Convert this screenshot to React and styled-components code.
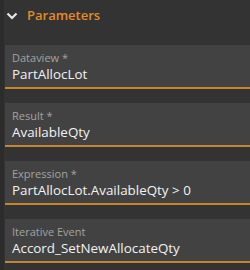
import React from 'react';
import styled, { createGlobalStyle } from 'styled-components';

const GlobalStyle = createGlobalStyle`
  html, body {
    margin: 0;
    padding: 0;
    background: #333333;
  }
  body {
    font-family: 'Open Sans', 'Noto Sans', sans-serif;
  }
`;

const Panel = styled.div`
  width: 250px;
  height: 270px;
  background: #333333;
  border-left: 4px solid #2c2c2c;
  box-sizing: border-box;
  overflow: hidden;
`;

const Header = styled.div`
  display: flex;
  align-items: center;
  gap: 9px;
  height: 30px;
  padding-left: 2px;
  color: #e38b26;
  font-size: 13px;
  font-weight: 600;
`;

const Chevron = styled.svg`
  width: 12px;
  height: 8px;
  margin-top: 1px;
`;

const Fields = styled.div`
  display: flex;
  flex-direction: column;
  gap: 14px;
  padding-top: 15px;
  padding-left: 1px;
`;

const Field = styled.div`
  display: flex;
  flex-direction: column;
  background: #424242;
  border-bottom: 2px solid #c4852e;
  padding: 6px 0 0 7px;
  box-sizing: content-box;
  height: 36px;
`;

const Label = styled.div`
  color: #a3a3a3;
  font-size: 11px;
  line-height: 14px;
`;

const Value = styled.div`
  color: #f2f2f2;
  font-size: 13.4px;
  line-height: 18px;
  white-space: nowrap;
`;

const fields = [
  { label: 'Dataview *', value: 'PartAllocLot' },
  { label: 'Result *', value: 'AvailableQty' },
  { label: 'Expression *', value: 'PartAllocLot.AvailableQty > 0' },
  { label: 'Iterative Event', value: 'Accord_SetNewAllocateQty' },
];

export default function App() {
  return (
    <>
      <GlobalStyle />
      <Panel>
        <Header>
          <Chevron viewBox="0 0 12 8">
            <path d="M1.5 1.5 L6 6 L10.5 1.5" fill="none" stroke="#e8e8e8" strokeWidth="2.2" />
          </Chevron>
          Parameters
        </Header>
        <Fields>
          {fields.map((f) => (
            <Field key={f.label}>
              <Label>{f.label}</Label>
              <Value>{f.value}</Value>
            </Field>
          ))}
        </Fields>
      </Panel>
    </>
  );
}
